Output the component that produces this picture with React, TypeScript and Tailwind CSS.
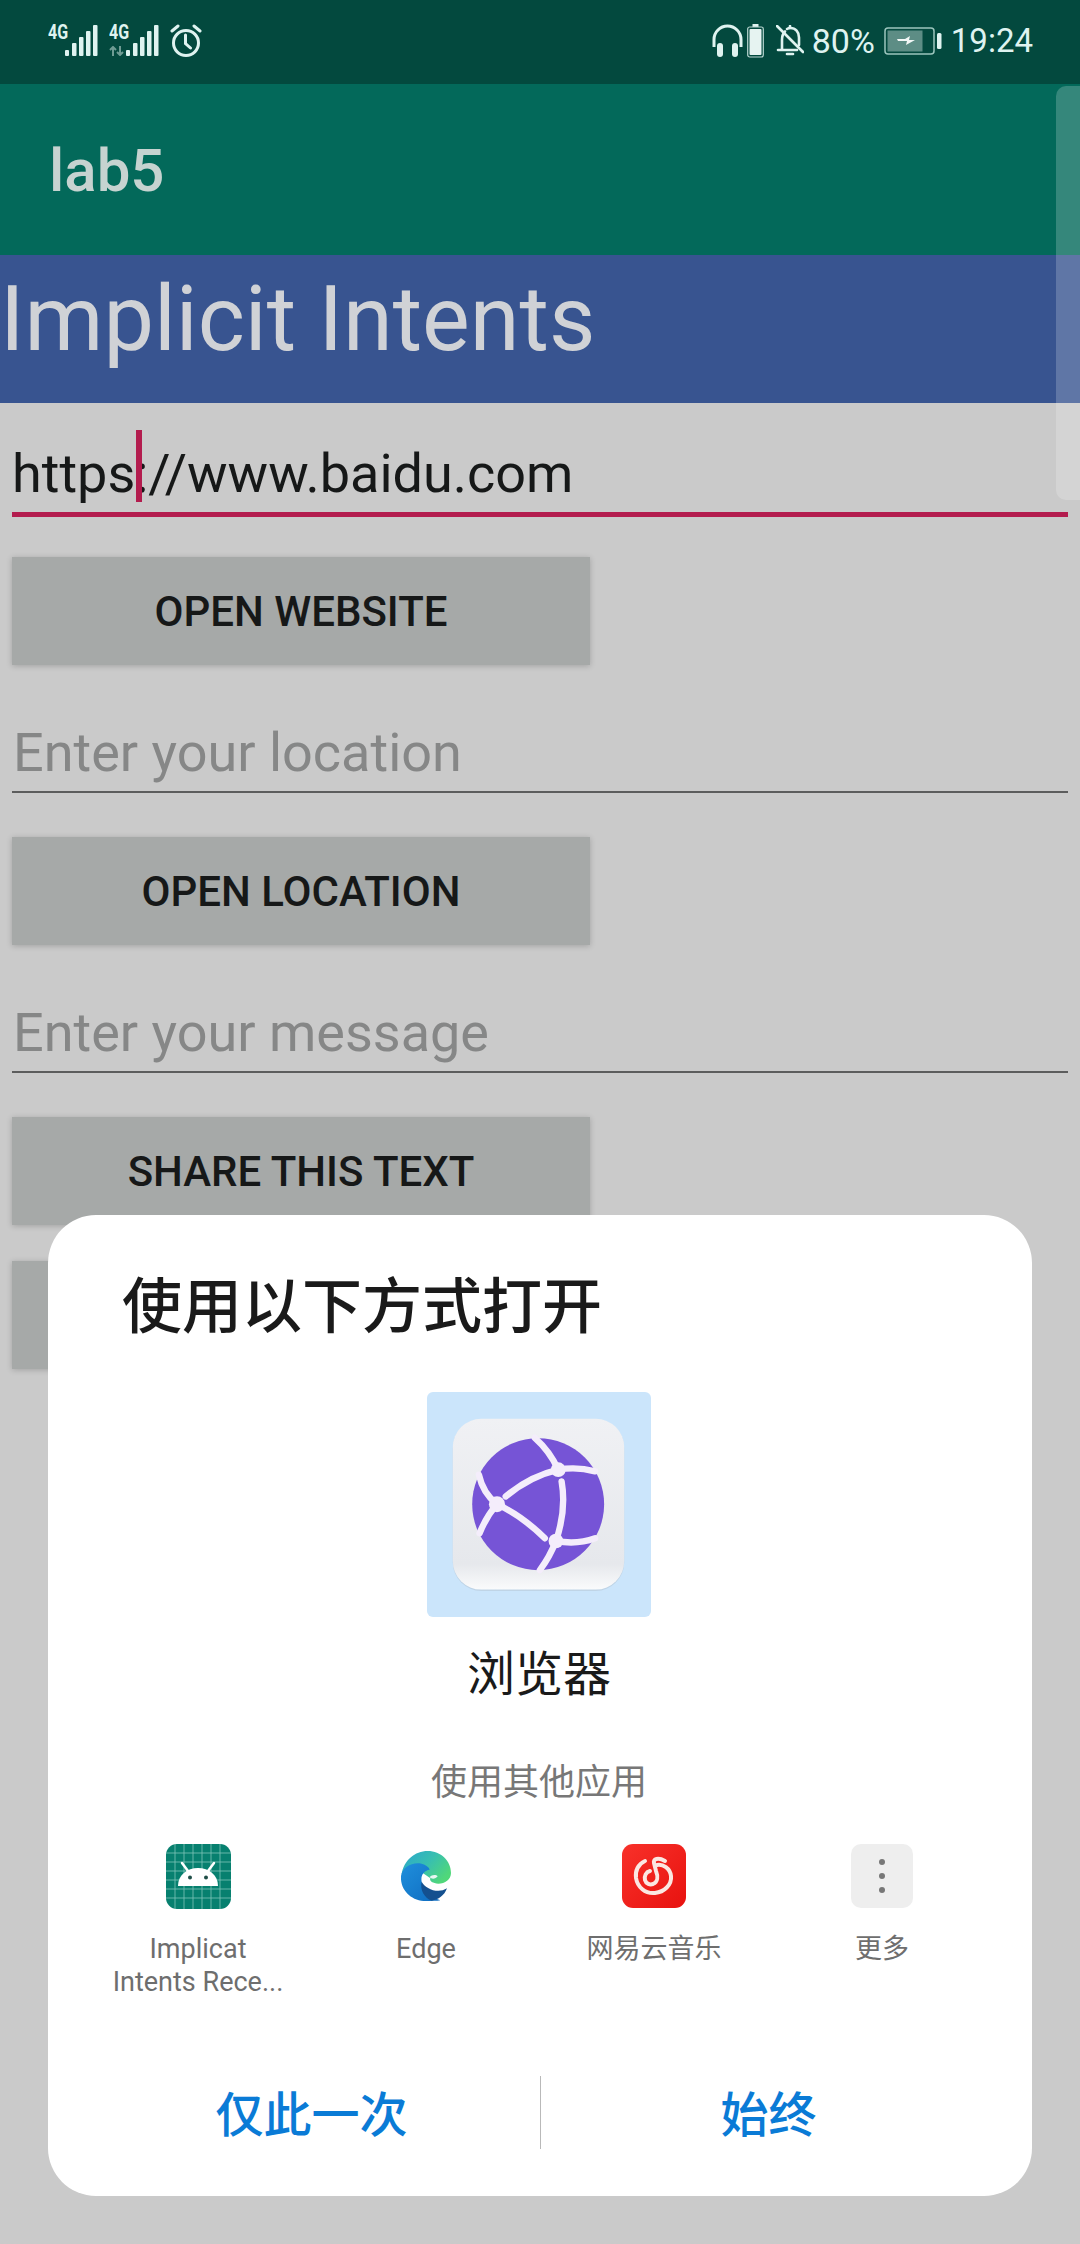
const font = "font-['Roboto','Noto_Sans_CJK_SC',sans-serif]";

function SignalBars() {
  return (
    <svg width="33" height="31" viewBox="0 0 33 31" fill="#dff3f0">
      <rect x="0" y="25" width="4" height="6" rx="1" />
      <rect x="7" y="18" width="4.5" height="13" rx="1" />
      <rect x="14" y="12" width="4.5" height="19" rx="1" />
      <rect x="21" y="6" width="4.5" height="25" rx="1" />
      <rect x="28" y="0" width="4.5" height="31" rx="1" />
    </svg>
  );
}

function NetworkGroup({ arrows }: { arrows?: boolean }) {
  return (
    <div className="relative flex h-[31px] w-[50px] items-end justify-end">
      <span className="absolute left-0 top-[-3px] origin-top-left scale-x-[0.8] text-[20px] font-bold leading-[20px] text-[#dff3f0]">
        4G
      </span>
      {arrows && (
        <svg className="absolute left-0 bottom-0" width="15" height="10" viewBox="0 0 15 10" fill="none" stroke="#6f9c94" strokeWidth="2">
          <path d="M4 10V2M1 4l3-3 3 3M11 0v8M8 6l3 3 3-3" />
        </svg>
      )}
      <SignalBars />
    </div>
  );
}

function AlarmIcon() {
  return (
    <svg width="32" height="34" viewBox="0 0 32 34" fill="none" stroke="#dff3f0" strokeWidth="3" strokeLinecap="round">
      <circle cx="16" cy="19" r="12.5" />
      <path d="M15.5 11v8.5l5 4.5M2 7l6-5M30 7l-6-5" />
    </svg>
  );
}

function StatusRight() {
  return (
    <div className="flex items-center">
      <svg width="31" height="34" viewBox="0 0 31 34" fill="none" stroke="#dff3f0" strokeWidth="3">
        <path d="M2 23V15.5a13.5 13.5 0 0 1 27 0V23" />
        <rect x="5" y="19" width="6" height="14" rx="3" fill="#dff3f0" stroke="none" />
        <rect x="20" y="19" width="6" height="14" rx="3" fill="#dff3f0" stroke="none" />
      </svg>
      <svg className="ml-[4px]" width="17" height="34" viewBox="0 0 17 34">
        <rect x="5.5" y="0" width="6" height="3" fill="#dff3f0" />
        <rect x="0.7" y="3" width="15.6" height="30" rx="2" fill="none" stroke="#b9d6d1" strokeWidth="1.2" />
        <rect x="2.5" y="5" width="12" height="26" rx="1" fill="#e6f3f1" />
      </svg>
      <svg className="ml-[12px]" width="28" height="31" viewBox="0 0 28 31" fill="none" stroke="#dff3f0" strokeWidth="2.6" strokeLinecap="round">
        <path d="M6 24V15c0-4.500 1.500-7 3-8.500M11 4c1-.7 2-1 3.500-1 5 0 8.500 4 8.500 9.500V20M2 25h19" />
        <path d="M1 1l26 26" />
        <path d="M11 29h6" />
        <path d="M14 1v2" />
      </svg>
      <span className="ml-[8px] text-[34px] leading-none text-[#dff3f0]">80%</span>
      <svg className="ml-[9px]" width="58" height="28" viewBox="0 0 58 28">
        <rect x="1" y="1" width="49" height="26" rx="3" fill="none" stroke="#9cc5bd" strokeWidth="1.5" />
        <rect x="3.500" y="3.500" width="35" height="21" fill="#5d8d85" />
        <path d="M13 12h8l5-3-1 4h6l-9 5 1-4h-9z" fill="#f2f7f6" />
        <rect x="53" y="6" width="4.500" height="16" rx="1.500" fill="#dff3f0" />
      </svg>
      <span className="ml-[9px] text-[33px] leading-none text-[#dff3f0]">19:24</span>
    </div>
  );
}

function StatusBar() {
  return (
    <div className="flex h-[84px] items-center justify-between bg-[#03493e] pl-[48px] pr-[47px] pb-[3px]">
      <div className="flex items-center gap-[11px]">
        <NetworkGroup />
        <NetworkGroup arrows />
        <AlarmIcon />
      </div>
      <StatusRight />
    </div>
  );
}

function GreyButton({ label }: { label: string }) {
  return (
    <div className="flex h-[108px] w-[578px] items-center justify-center bg-[#a6a9a8] pt-[2px] text-[42px] font-medium leading-none text-[#161818] shadow-[0_1px_6px_rgba(0,0,0,0.2)]">
      {label}
    </div>
  );
}

function PlainField({ placeholder }: { placeholder: string }) {
  return (
    <div className="flex h-[74px] flex-col justify-end">
      <div className="pb-[8px] pl-[1px] text-[54px] leading-[60px] text-[#868787]">{placeholder}</div>
      <div className="h-[2px] w-[1056px] bg-[#5c5d5d]" />
    </div>
  );
}

function AppBackground() {
  return (
    <div className="flex h-[2160px] flex-col bg-[#cacaca]">
      <div className="flex h-[171px] items-center bg-[#03695a] pl-[49px] pt-[3px] text-[60px] font-medium leading-none text-[#c6d3d0]">
        lab5
      </div>
      <div className="flex h-[148px] items-center bg-[#385490] pb-[18px] text-[90px] leading-none text-[#d0d2d6]">
        Implicit Intents
      </div>
      <div className="flex flex-col pl-[12px]">
        <div className="flex h-[114px] items-end">
          <div className="w-[1056px] border-b-[5px] border-[#b31c4e] pb-[8px] text-[54px] leading-[60px] text-[#161818]">
            <span className="relative">
              https
              <span className="absolute right-[-7px] top-[-12px] h-[72px] w-[6px] bg-[#b31c4e]" />
            </span>
            ://www.baidu.com
          </div>
        </div>
        <div className="mt-[40px]"><GreyButton label="OPEN WEBSITE" /></div>
        <div className="mt-[54px]"><PlainField placeholder="Enter your location" /></div>
        <div className="mt-[44px]"><GreyButton label="OPEN LOCATION" /></div>
        <div className="mt-[54px]"><PlainField placeholder="Enter your message" /></div>
        <div className="mt-[44px]"><GreyButton label="SHARE THIS TEXT" /></div>
        <div className="mt-[36px]"><GreyButton label="" /></div>
      </div>
    </div>
  );
}

function BrowserIcon() {
  const lines = [
    'M405 205Q450 245 475 300',
    'M475 300Q530 290 585 305',
    'M475 300Q390 320 318 380',
    'M485 335Q500 420 468 513',
    'M292 403Q250 370 238 315',
    'M292 403Q260 440 240 490',
    'M292 403Q370 440 435 505',
    'M468 513Q530 525 585 505',
    'M468 513Q450 560 420 600',
  ];
  return (
    <svg width="224" height="225" viewBox="83 68 669 672">
      <defs>
        <linearGradient id="tile" x1="0" y1="0" x2="0" y2="1">
          <stop offset="0" stopColor="#f0f1f4" />
          <stop offset="0.85" stopColor="#e6e8ec" />
          <stop offset="1" stopColor="#fafbfc" />
        </linearGradient>
      </defs>
      <rect x="83" y="68" width="669" height="672" rx="18" fill="#cbe5fb" />
      <rect x="160" y="150" width="512" height="512" rx="85" fill="#b8c8d8" opacity="0.6" />
      <rect x="160" y="148" width="512" height="510" rx="85" fill="url(#tile)" />
      <circle cx="415" cy="403" r="197" fill="#7654d6" />
      <g fill="none" stroke="#f4edfb" strokeWidth="19" strokeLinecap="round">
        {lines.map((d) => (
          <path key={d} d={d} />
        ))}
      </g>
      <g fill="#f4edfb">
        <circle cx="475" cy="300" r="22" />
        <circle cx="292" cy="403" r="24" />
        <circle cx="468" cy="513" r="22" />
      </g>
    </svg>
  );
}

function AndroidIcon() {
  const ticks = [9, 18, 27, 36, 45, 54];
  return (
    <svg width="65" height="65" viewBox="0 0 65 65">
      <rect width="65" height="65" rx="11" fill="#07806f" />
      <g stroke="#7fc4b9" strokeWidth="0.8">
        {ticks.map((t) => (
          <g key={t}>
            <path d={`M${t} 0V65`} />
            <path d={`M0 ${t}H65`} />
          </g>
        ))}
      </g>
      <path d="M12 42C12 31 21 24 32 24S52 31 52 42Z" fill="#fff" />
      <path d="M22 27L16 19M42 27L48 19" stroke="#fff" strokeWidth="2.5" strokeLinecap="round" />
      <circle cx="24" cy="33.500" r="2" fill="#1f4e47" />
      <circle cx="40" cy="33.500" r="2" fill="#1f4e47" />
    </svg>
  );
}

function EdgeIcon() {
  return (
    <svg width="50" height="50" viewBox="0 0 150 150">
      <defs>
        <linearGradient id="edgeTop" x1="0" y1="0" x2="1" y2="0.6">
          <stop offset="0" stopColor="#2aa6cf" />
          <stop offset="0.55" stopColor="#38bfb0" />
          <stop offset="1" stopColor="#50d77a" />
        </linearGradient>
        <linearGradient id="edgeMid" x1="0" y1="0" x2="1" y2="1">
          <stop offset="0" stopColor="#1f8fdc" />
          <stop offset="1" stopColor="#0f6cc0" />
        </linearGradient>
      </defs>
      <path d="M2 70C8 28 42 0 80 0C120 0 150 30 150 66C150 86 132 98 112 98C96 98 84 90 88 82L60 62L20 60Z" fill="url(#edgeTop)" />
      <path d="M0 75C4 48 34 32 62 38C74 41 84 48 86 56C70 58 58 72 62 92C66 116 92 138 118 148C108 150 90 150 75 150C32 150 -3 118 0 75Z" fill="url(#edgeMid)" />
      <path d="M62 92C72 112 110 130 138 112C130 134 112 146 92 149C70 140 56 116 62 92Z" fill="#14508f" />
      <path d="M86 78C92 70 106 70 110 76C104 84 92 86 86 78Z" fill="#e8f6f2" />
    </svg>
  );
}

function NeteaseIcon() {
  return (
    <svg width="64" height="64" viewBox="0 0 64 64">
      <defs>
        <linearGradient id="red" x1="0" y1="0" x2="1" y2="1">
          <stop offset="0" stopColor="#f8312a" />
          <stop offset="1" stopColor="#e8120f" />
        </linearGradient>
      </defs>
      <rect width="64" height="64" rx="11" fill="url(#red)" />
      <g fill="none" stroke="#fbe7e2" strokeWidth="4" strokeLinecap="round">
        <path d="M23 17C16 20 13 27 14 34C15.500 43 23 50 33 49C42 48 50 41 49 32C48 24 41 20 35 21" />
        <path d="M28 27C24 28 22 32 23 36C24 40 28 41 31 40C36 38 36 32 34 27L32 19C31 15 36 13 43 17" />
      </g>
    </svg>
  );
}

function MoreIcon() {
  return (
    <div className="flex h-[64px] w-[62px] flex-col items-center justify-center gap-[8px] rounded-[10px] bg-[#eeeeee]">
      <span className="size-[6px] rounded-full bg-[#777777]" />
      <span className="size-[6px] rounded-full bg-[#777777]" />
      <span className="size-[6px] rounded-full bg-[#777777]" />
    </div>
  );
}

function AppChoice({ icon, label }: { icon: React.ReactNode; label: React.ReactNode }) {
  return (
    <div className="flex w-[228px] flex-col items-center">
      <div className="flex h-[66px] items-center justify-center">{icon}</div>
      <div className="mt-[24px] text-center text-[27px] leading-[33px] text-[#6e6e6e]">{label}</div>
    </div>
  );
}

function OpenWithDialog() {
  return (
    <div className="absolute left-[48px] top-[1215px] flex h-[981px] w-[984px] flex-col rounded-[48px] bg-white">
      <div className="pl-[74px] pt-[57px] text-[60px] font-medium leading-[72px] text-[#1a1a1a]">使用以下方式打开</div>
      <div className="mt-[48px] flex justify-center pr-[2px]">
        <BrowserIcon />
      </div>
      <div className="mt-[28px] pr-[2px] text-center text-[48px] font-normal leading-[60px] text-[#1a1a1a]">浏览器</div>
      <div className="mt-[56px] pr-[2px] text-center text-[36px] leading-[44px] text-[#777777]">使用其他应用</div>
      <div className="mt-[38px] flex pl-[36px]">
        <AppChoice
          icon={<AndroidIcon />}
          label={
            <>
              Implicat
              <br />
              Intents Rece...
            </>
          }
        />
        <AppChoice icon={<EdgeIcon />} label="Edge" />
        <AppChoice icon={<NeteaseIcon />} label="网易云音乐" />
        <AppChoice icon={<MoreIcon />} label="更多" />
      </div>
      <div className="mt-auto mb-[47px] flex h-[73px] items-center">
        <div className="w-[492px] pl-[35px] pt-[6px] text-center text-[48px] font-medium leading-none text-[#0a7bd6]">仅此一次</div>
        <div className="h-[73px] w-[1px] bg-[#b9b9b9]" />
        <div className="flex-1 pr-[36px] pt-[6px] text-center text-[48px] font-medium leading-none text-[#0a7bd6]">始终</div>
      </div>
    </div>
  );
}

export default function App() {
  return (
    <div className={`relative h-[2244px] w-[1080px] overflow-hidden ${font}`}>
      <StatusBar />
      <AppBackground />
      {/* scrollbar thumb over the activity */}
      <div className="absolute right-0 top-[86px] h-[414px] w-[24px] rounded-tl-[10px] rounded-bl-[10px] bg-white/20" />
      <OpenWithDialog />
    </div>
  );
}
